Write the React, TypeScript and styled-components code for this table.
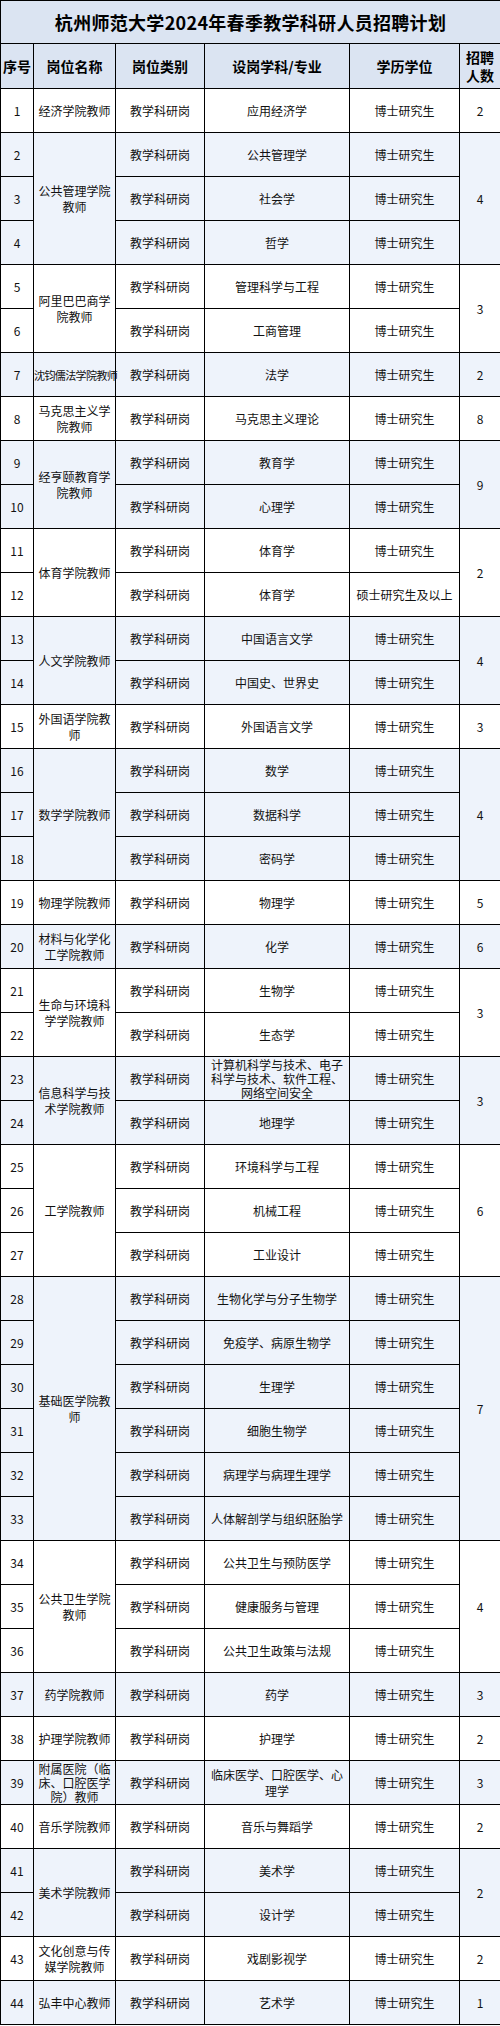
import React from "react";
import styled, { createGlobalStyle } from "styled-components";

const GlobalStyle = createGlobalStyle`
  html, body { margin: 0; padding: 0; background: #ffffff; }
  body { font-family: "Noto Sans CJK SC", "Noto Sans", sans-serif; color: #000; }
`;

type Group = {
  name: string;
  nameCompact?: boolean;
  nameTight?: boolean;
  subjects: { subject: string; degree?: string; tight?: boolean }[];
  count: number;
};

const groups: Group[] = [
  { name: "经济学院教师", subjects: [{ subject: "应用经济学" }], count: 2 },
  { name: "公共管理学院教师", subjects: [{ subject: "公共管理学" }, { subject: "社会学" }, { subject: "哲学" }], count: 4 },
  { name: "阿里巴巴商学院教师", subjects: [{ subject: "管理科学与工程" }, { subject: "工商管理" }], count: 3 },
  { name: "沈钧儒法学院教师", nameCompact: true, subjects: [{ subject: "法学" }], count: 2 },
  { name: "马克思主义学院教师", subjects: [{ subject: "马克思主义理论" }], count: 8 },
  { name: "经亨颐教育学院教师", subjects: [{ subject: "教育学" }, { subject: "心理学" }], count: 9 },
  { name: "体育学院教师", subjects: [{ subject: "体育学" }, { subject: "体育学", degree: "硕士研究生及以上" }], count: 2 },
  { name: "人文学院教师", subjects: [{ subject: "中国语言文学" }, { subject: "中国史、世界史" }], count: 4 },
  { name: "外国语学院教师", subjects: [{ subject: "外国语言文学" }], count: 3 },
  { name: "数学学院教师", subjects: [{ subject: "数学" }, { subject: "数据科学" }, { subject: "密码学" }], count: 4 },
  { name: "物理学院教师", subjects: [{ subject: "物理学" }], count: 5 },
  { name: "材料与化学化工学院教师", subjects: [{ subject: "化学" }], count: 6 },
  { name: "生命与环境科学学院教师", subjects: [{ subject: "生物学" }, { subject: "生态学" }], count: 3 },
  {
    name: "信息科学与技术学院教师",
    subjects: [{ subject: "计算机科学与技术、电子科学与技术、软件工程、网络空间安全", tight: true }, { subject: "地理学" }],
    count: 3,
  },
  { name: "工学院教师", subjects: [{ subject: "环境科学与工程" }, { subject: "机械工程" }, { subject: "工业设计" }], count: 6 },
  {
    name: "基础医学院教师",
    subjects: [
      { subject: "生物化学与分子生物学" },
      { subject: "免疫学、病原生物学" },
      { subject: "生理学" },
      { subject: "细胞生物学" },
      { subject: "病理学与病理生理学" },
      { subject: "人体解剖学与组织胚胎学" },
    ],
    count: 7,
  },
  {
    name: "公共卫生学院教师",
    subjects: [{ subject: "公共卫生与预防医学" }, { subject: "健康服务与管理" }, { subject: "公共卫生政策与法规" }],
    count: 4,
  },
  { name: "药学院教师", subjects: [{ subject: "药学" }], count: 3 },
  { name: "护理学院教师", subjects: [{ subject: "护理学" }], count: 2 },
  { name: "附属医院（临床、口腔医学院）教师", nameTight: true, subjects: [{ subject: "临床医学、口腔医学、心理学" }], count: 3 },
  { name: "音乐学院教师", subjects: [{ subject: "音乐与舞蹈学" }], count: 2 },
  { name: "美术学院教师", subjects: [{ subject: "美术学" }, { subject: "设计学" }], count: 2 },
  { name: "文化创意与传媒学院教师", subjects: [{ subject: "戏剧影视学" }], count: 2 },
  { name: "弘丰中心教师", subjects: [{ subject: "艺术学" }], count: 1 },
];

const Table = styled.table`
  width: 500px;
  table-layout: fixed;
  border-collapse: collapse;
  border-spacing: 0;
`;

const TitleCell = styled.th`
  height: 42px;
  padding: 0;
  border: 1px solid #000;
  background: #dbe4f2;
  font-size: 18px;
  font-weight: 700;
  letter-spacing: 0.3px;
  text-align: center;
  vertical-align: middle;
`;

const HeadCell = styled.th`
  height: 44px;
  padding: 0 2px;
  border: 1px solid #000;
  background: #dbe4f2;
  font-size: 14px;
  font-weight: 700;
  line-height: 18px;
  text-align: center;
  vertical-align: middle;
`;

const Cell = styled.td<{ $shade: boolean; $pad?: number; $tight?: boolean; $compact?: boolean }>`
  height: 43px;
  padding: 0 ${(p) => p.$pad ?? 4}px;
  border: 1px solid #000;
  background: ${(p) => (p.$shade ? "#eef3fb" : "#ffffff")};
  font-size: ${(p) => (p.$compact ? 11 : 12)}px;
  letter-spacing: ${(p) => (p.$compact ? "-0.6px" : "normal")};
  white-space: ${(p) => (p.$compact ? "nowrap" : "normal")};
  line-height: ${(p) => (p.$tight ? 14 : 16)}px;
  color: #111;
  text-align: center;
  vertical-align: middle;
  word-break: break-all;
  overflow: visible;
`;

export default function App() {
  let seq = 0;
  return (
    <>
      <GlobalStyle />
      <Table>
        <colgroup>
          <col style={{ width: 33 }} />
          <col style={{ width: 82 }} />
          <col style={{ width: 89 }} />
          <col style={{ width: 145 }} />
          <col style={{ width: 110 }} />
          <col style={{ width: 41 }} />
        </colgroup>
        <thead>
          <tr>
            <TitleCell colSpan={6}>杭州师范大学2024年春季教学科研人员招聘计划</TitleCell>
          </tr>
          <tr>
            <HeadCell>序号</HeadCell>
            <HeadCell>岗位名称</HeadCell>
            <HeadCell>岗位类别</HeadCell>
            <HeadCell>设岗学科/专业</HeadCell>
            <HeadCell>学历学位</HeadCell>
            <HeadCell>
              招聘
              <br />
              人数
            </HeadCell>
          </tr>
        </thead>
        <tbody>
          {groups.map((g, gi) => {
            const shade = gi % 2 === 1;
            const span = g.subjects.length;
            return g.subjects.map((s, si) => {
              seq += 1;
              return (
                <tr key={`${gi}-${si}`}>
                  <Cell $shade={shade} $pad={1}>{seq}</Cell>
                  {si === 0 && (
                    <Cell
                      $shade={shade}
                      rowSpan={span}
                      $compact={g.nameCompact}
                      $pad={g.nameCompact ? 0 : 4}
                      $tight={g.nameTight}
                    >
                      {g.name}
                    </Cell>
                  )}
                  <Cell $shade={shade}>教学科研岗</Cell>
                  <Cell $shade={shade} $pad={5} $tight={s.tight}>
                    {s.subject}
                  </Cell>
                  <Cell $shade={shade}>{s.degree ?? "博士研究生"}</Cell>
                  {si === 0 && (
                    <Cell $shade={shade} rowSpan={span} $pad={1}>
                      {g.count}
                    </Cell>
                  )}
                </tr>
              );
            });
          })}
        </tbody>
      </Table>
    </>
  );
}
